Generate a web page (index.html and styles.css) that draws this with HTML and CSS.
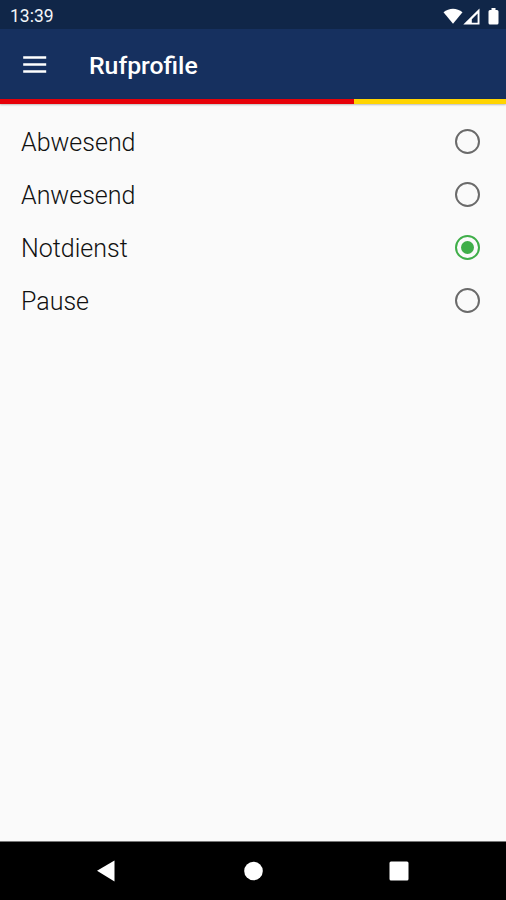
FILE: index.html
```html
<!DOCTYPE html>
<html lang="de">
<head>
<meta charset="utf-8">
<title>Rufprofile</title>
<link rel="stylesheet" href="styles.css">
</head>
<body>
<div class="screen">
  <div class="status">
    <span class="clock">13:39</span>
    <svg class="indicators" width="58" height="20" viewBox="0 0 58 20" fill="#fff">
      <path d="M0.500 5.200C6 0.500 14 0.500 19.500 5.200L10 16.800Z"/>
      <path fill-rule="evenodd" d="M20.300 17.500L36.500 1.500V17.500ZM28.800 15.700H34.600V6.500L28.800 12.300Z"/>
      <path d="M47 3h1.500V1h4v2H54q1.500 0 1.500 1.500V16q0 1.500-1.500 1.500h-7q-1.500 0-1.500-1.500V4.500q0-1.500 1.500-1.500z"/>
    </svg>
  </div>
  <header class="appbar">
    <svg class="menu" width="24" height="18" viewBox="0 0 24 18" fill="#fff">
      <path d="M0.200 0.200h23v2.600h-23zM0.200 7.200h23v2.600h-23zM0.200 14.200h23v2.600h-23z"/>
    </svg>
    <h1 class="title">Rufprofile</h1>
  </header>
  <div class="stripe"></div>
  <main class="profiles">
    <label class="row"><span class="name">Abwesend</span><span class="radio"></span></label>
    <label class="row"><span class="name">Anwesend</span><span class="radio"></span></label>
    <label class="row"><span class="name">Notdienst</span><span class="radio checked"></span></label>
    <label class="row"><span class="name">Pause</span><span class="radio"></span></label>
  </main>
  <nav class="navbar">
    <svg width="20" height="22" viewBox="0 0 20 22" fill="#fff"><path d="M1 10.700L18.500 0.500V21.500Z"/></svg>
    <svg width="20" height="20" viewBox="0 0 20 20" fill="#fff"><circle cx="10.500" cy="10" r="9.300"/></svg>
    <svg width="20" height="20" viewBox="0 0 20 20" fill="#fff"><rect x="0.500" y="0.500" width="19" height="19" rx="1.500"/></svg>
  </nav>
</div>
</body>
</html>
```
FILE: styles.css
```css
body {
  margin: 0;
  font-family: Roboto, "Liberation Sans", sans-serif;
}
.screen {
  display: flex;
  flex-direction: column;
  height: 900px;
  background: #fafafa;
}
.status {
  display: flex;
  justify-content: space-between;
  align-items: center;
  box-sizing: border-box;
  height: 29px;
  padding: 3px 5px 0 10px;
  background: #102648;
  color: #f4f6fa;
}
.clock {
  font-size: 17.5px;
  line-height: 20px;
}
.indicators {
  margin: 1px 3px 0 0;
  margin-right: 0;
}
.appbar {
  display: flex;
  align-items: center;
  gap: 42px;
  box-sizing: border-box;
  height: 70px;
  padding: 2px 23px 0;
  background: #16305f;
}
.title {
  margin: 2px 0 0;
  color: #fff;
  font-size: 24.8px;
  font-weight: 500;
  line-height: 30px;
}
.stripe {
  height: 5px;
  background: linear-gradient(90deg, #e60008 354px, #ffd400 354px);
  box-shadow: 0 1px 2px rgba(0, 0, 0, 0.25);
}
.profiles {
  flex: 1;
  padding: 11px 26px 0 21px;
}
.row {
  display: flex;
  justify-content: space-between;
  align-items: center;
  height: 53px;
}
.name {
  margin-top: 2px;
  color: #111;
  font-size: 25px;
  font-weight: 300;
  line-height: 30px;
}
.radio {
  display: flex;
  align-items: center;
  justify-content: center;
  box-sizing: border-box;
  width: 25px;
  height: 25px;
  border: 2px solid #6a6a6a;
  border-radius: 50%;
}
.checked {
  border-color: #3fae49;
}
.checked::after {
  content: "";
  width: 13px;
  height: 13px;
  border-radius: 50%;
  background: #3fae49;
}
.navbar {
  display: flex;
  gap: 126.5px;
  align-items: center;
  box-sizing: border-box;
  height: 59px;
  padding: 0 0 1px 96px;
  border-top: 1px solid #777;
  background: #000;
}
```
